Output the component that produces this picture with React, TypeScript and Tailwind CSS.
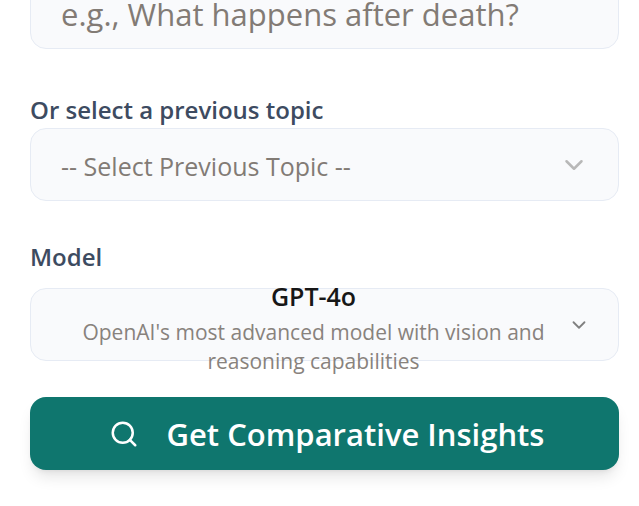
import { ChevronDown, Search } from "lucide-react";

const field = "h-[73px] w-full rounded-2xl border border-[#e6ebf4] bg-[#f9fafc]";
const label = "block text-2xl leading-9 font-semibold text-[#3d4b61]";

export default function App() {
  return (
    <main className="min-h-screen overflow-hidden bg-white pr-5 pl-[30px] font-['Open_Sans','Noto_Sans',sans-serif]">
      <form className="-mt-6 flex flex-col" onSubmit={(e) => e.preventDefault()}>
        <input
          type="text"
          aria-label="Topic"
          placeholder="e.g., What happens after death?"
          className={`${field} px-[30px] pt-0.5 text-[31px] text-stone-700 placeholder:text-[#827b75]`}
        />

        <div className="mt-[43px]">
          <label htmlFor="previous" className={label}>
            Or select a previous topic
          </label>
          <div className="relative">
            <select
              id="previous"
              className={`${field} block appearance-none pt-1 pr-16 pl-[30px] text-[25px] text-[#827b75]`}
            >
              <option>-- Select Previous Topic --</option>
            </select>
            <ChevronDown
              aria-hidden="true"
              strokeWidth={2}
              className="pointer-events-none absolute inset-y-0 right-[30px] my-auto size-[30px] text-[#b8b8b8]"
            />
          </div>
        </div>

        <div className="mt-[38px]">
          <label htmlFor="model" className={`${label} mb-[13px]`}>
            Model
          </label>
          <button
            id="model"
            type="button"
            className={`${field} flex items-center justify-between pr-7 pl-7`}
          >
            <span className="flex flex-1 flex-col items-center gap-1 pt-1">
              <span className="text-[25px] leading-9 font-semibold text-[#171717]">GPT-4o</span>
              <span className="text-[21px] leading-[29px] text-[#88827d]">
                OpenAI's most advanced model with vision and reasoning capabilities
              </span>
            </span>
            <ChevronDown aria-hidden="true" strokeWidth={2} className="size-[22px] shrink-0 text-[#808080]" />
          </button>
        </div>

        <button
          type="submit"
          className="mt-9 flex h-[73px] w-full items-center justify-center gap-7 rounded-2xl bg-[#0f766e] pl-1 text-[31px] font-semibold text-white shadow-lg"
        >
          <Search aria-hidden="true" strokeWidth={2} className="size-[30px]" />
          <span className="pt-0.5">Get Comparative Insights</span>
        </button>
      </form>
    </main>
  );
}
